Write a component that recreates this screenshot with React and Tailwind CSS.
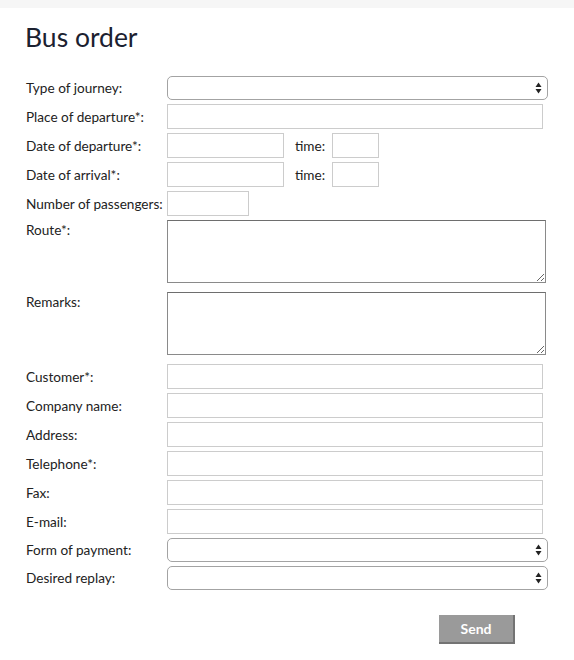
import React from 'react';

const Arrows = () => (
    <svg className="pointer-events-none absolute right-[6px] top-1/2 -translate-y-1/2" width="7" height="12" viewBox="0 0 7 12">
        <path d="M3.5 0.5 L6.5 5 L0.5 5 Z" fill="#222" />
        <path d="M3.5 11.5 L6.5 7 L0.5 7 Z" fill="#222" />
    </svg>
);

const Select = () => (
    <div className="relative w-[381px] h-[24px]">
        <select className="appearance-none w-full h-full rounded-[5px] border border-[#a3a3a3] bg-white" />
        <Arrows />
    </div>
);

const Input = ({ w = 'w-[376px]' }) => (
    <input type="text" className={`${w} h-[25px] border border-[#cccccc] bg-white`} />
);

const Row = ({ label, children, top = false, className = '' }) => (
    <div className={`flex ${top ? 'items-start' : 'items-center'} ${className}`}>
        <label className={`w-[141px] shrink-0 whitespace-nowrap ${top ? 'pt-[1px]' : ''}`}>{label}</label>
        {children}
    </div>
);

export default function App() {
    return (
        <div className="min-h-[660px] bg-white text-[13.6px] leading-[18px] text-[#222]" style={{ fontFamily: 'Lato, "Liberation Sans", sans-serif' }}>
            <div className="h-[8px] bg-[#f6f6f6]" />
            <div className="pl-[26px]">
                <h1 className="ml-[-1px] mt-[13px] text-[26.5px] leading-[32px] text-[#1b2130]">Bus order</h1>

                <form className="mt-[23px] flex flex-col gap-[4px]">
                    <Row label="Type of journey:"><Select /></Row>
                    <Row label="Place of departure*:"><Input /></Row>
                    <Row label="Date of departure*:">
                        <Input w="w-[117px]" />
                        <span className="ml-[11px] w-[37px]">time:</span>
                        <Input w="w-[47px]" />
                    </Row>
                    <Row label="Date of arrival*:">
                        <Input w="w-[117px]" />
                        <span className="ml-[11px] w-[37px]">time:</span>
                        <Input w="w-[47px]" />
                    </Row>
                    <Row label="Number of passengers:"><Input w="w-[82px]" /></Row>
                    <Row label="Route*:" top>
                        <textarea className="w-[379px] h-[63px] border border-[#8a8a8a] border-t-[#6e6e6e] bg-white" />
                    </Row>
                    <Row label="Remarks:" top className="mt-[5px]">
                        <textarea className="w-[379px] h-[63px] border border-[#8a8a8a] border-t-[#6e6e6e] bg-white" />
                    </Row>
                    <Row label="Customer*:" className="mt-[5px]"><Input /></Row>
                    <Row label="Company name:"><Input /></Row>
                    <Row label="Address:"><Input /></Row>
                    <Row label="Telephone*:"><Input /></Row>
                    <Row label="Fax:"><Input /></Row>
                    <Row label="E-mail:"><Input /></Row>
                    <Row label="Form of payment:"><Select /></Row>
                    <Row label="Desired replay:"><Select /></Row>
                    <div className="mt-[21px] pl-[413px]">
                        <button type="button" className="w-[76px] h-[29px] bg-[#9a9a9a] border-r-2 border-b-2 border-[#737373] text-white font-bold text-[14px]">
                            Send
                        </button>
                    </div>
                </form>
            </div>
        </div>
    );
}
